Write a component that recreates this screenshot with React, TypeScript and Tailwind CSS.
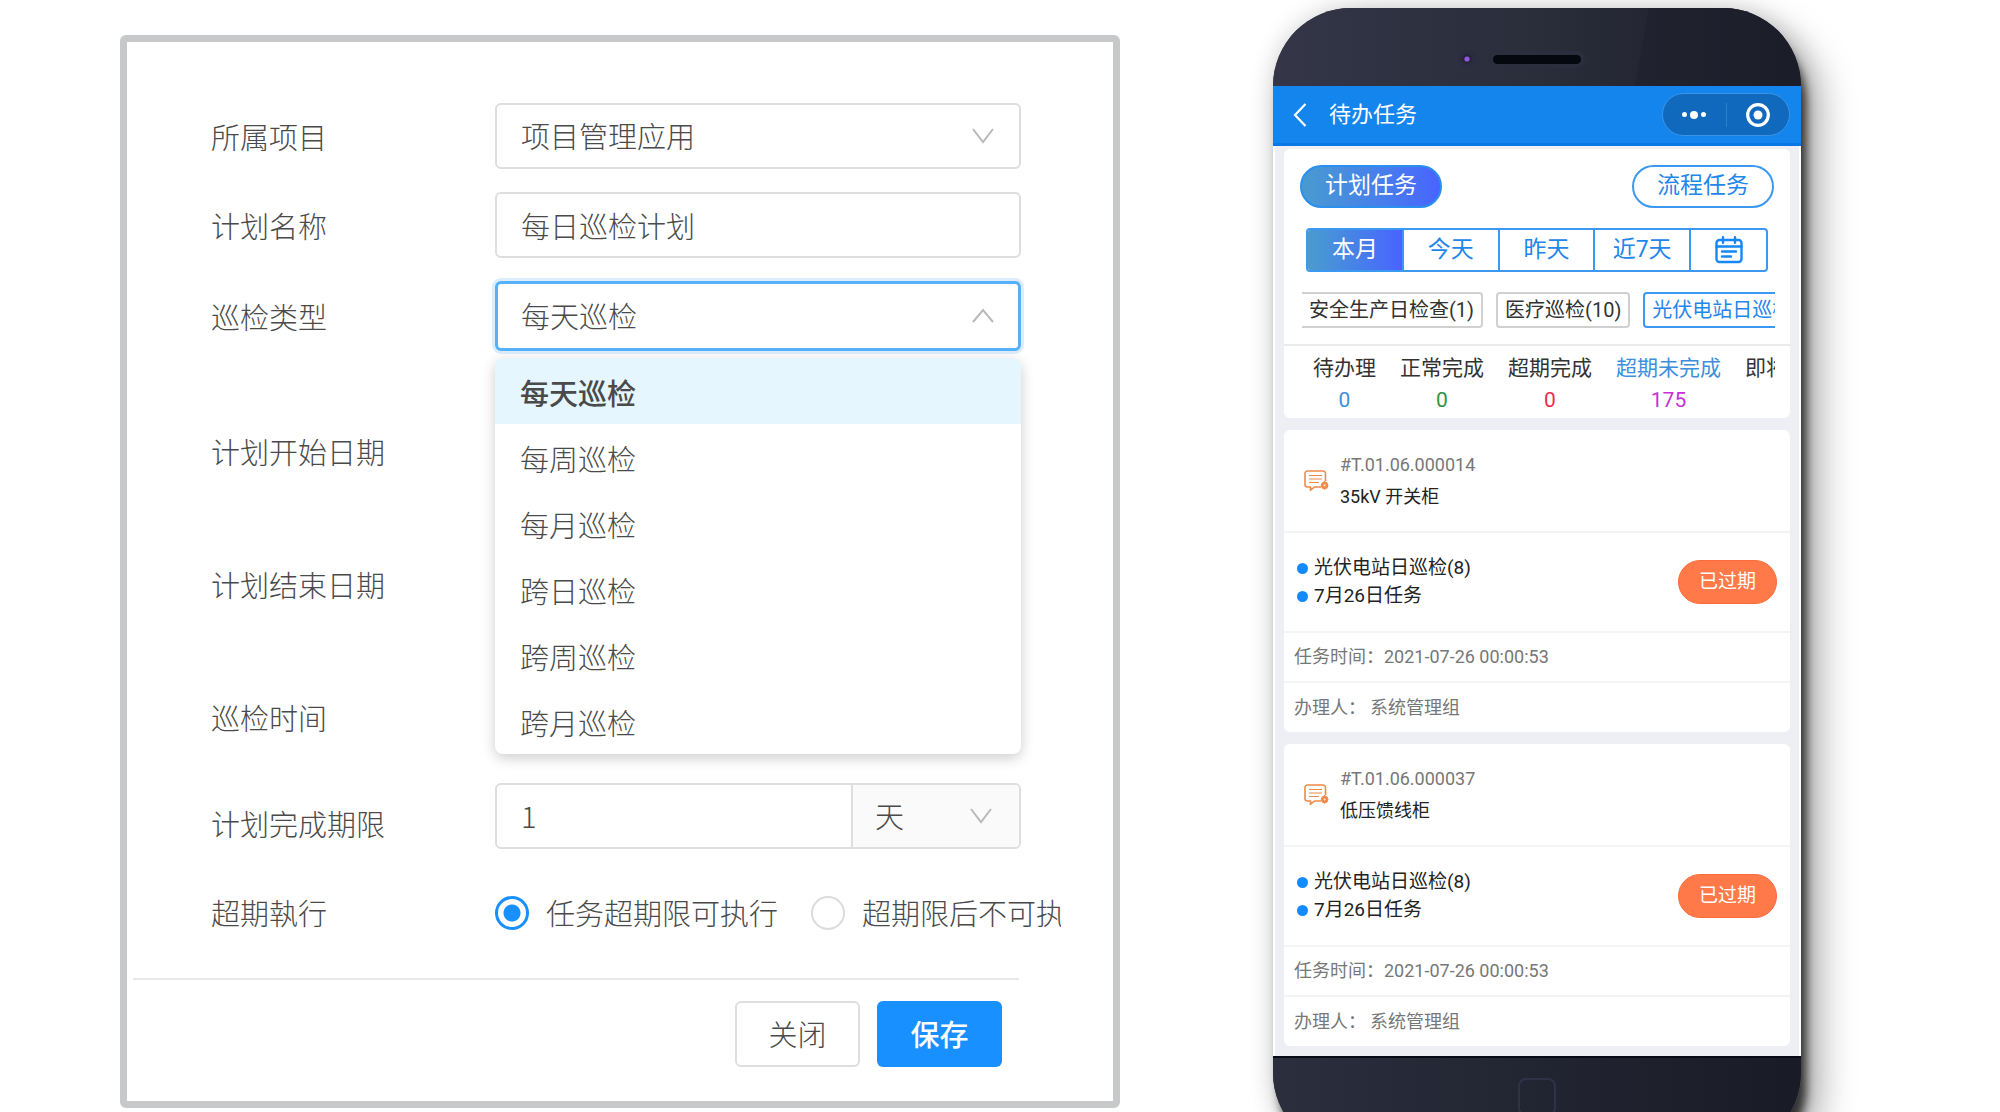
import React from 'react';

const FONT = "font-[Roboto,'Noto_Sans_CJK_SC',sans-serif]";

const inspectionTypes = ['每天巡检', '每周巡检', '每月巡检', '跨日巡检', '跨周巡检', '跨月巡检'];

const ranges = ['本月', '今天', '昨天', '近7天'];

const stats = [
  { label: '待办理', value: '0', labelColor: 'text-[#333]', valueColor: 'text-[#3d8fdc]' },
  { label: '正常完成', value: '0', labelColor: 'text-[#333]', valueColor: 'text-[#2f9440]' },
  { label: '超期完成', value: '0', labelColor: 'text-[#333]', valueColor: 'text-[#f02a55]' },
  { label: '超期未完成', value: '175', labelColor: 'text-[#3d8fdc]', valueColor: 'text-[#c92fd6]' },
  { label: '即将超期', value: '', labelColor: 'text-[#333]', valueColor: 'text-[#333]' },
];

const tasks = [
  { code: '#T.01.06.000014', device: '35kV 开关柜' },
  { code: '#T.01.06.000037', device: '低压馈线柜' },
];

const Chevron = ({ up = false }: { up?: boolean }) => (
  <svg
    className="pointer-events-none absolute right-[26px] top-1/2 -mt-2 h-4 w-6"
    viewBox="0 0 24 16"
    fill="none"
    stroke="#b9b9b9"
    strokeWidth="2"
  >
    {up ? <path d="M2 14 12 2l10 12" /> : <path d="M2 1l10 13L22 1" />}
  </svg>
);

const CalendarIcon = () => (
  <svg className="h-7 w-7" viewBox="0 0 28 28" fill="none" stroke="#1787f5" strokeWidth="2.4" strokeLinecap="round">
    <rect x="1.5" y="4" width="25" height="22" rx="3" />
    <path d="M1.5 10.5h25M8 1.2v5.6M20 1.2v5.6M7 15.5h14M7 20.5h9" />
  </svg>
);

const ChatIcon = () => (
  <svg className="h-[21px] w-[25px]" viewBox="0 0 25 21" fill="none" stroke="#f08a48" strokeWidth="1.6">
    <path d="M17 17H10.500l-4 3.200V17H3.500a2.500 2.500 0 0 1-2.500-2.500v-11A2.500 2.500 0 0 1 3.500 1h15.500A2.500 2.500 0 0 1 21.500 3.500v7.500" />
    <path d="M5 5.500h13M5 9h13M5 12.500h10" strokeWidth="1.200" />
    <circle cx="20.600" cy="15.400" r="3.600" fill="#f08a48" stroke="none" />
    <path d="M20.600 10.800l4 4.600-4 4.600-4-4.600z" fill="#f08a48" stroke="none" />
    <circle cx="20.600" cy="15.400" r="1.100" fill="#fbd9c2" stroke="none" />
  </svg>
);

type RowProps = { label: string; htmlFor?: string; className?: string; children?: React.ReactNode };

const FormRow = ({ label, htmlFor, className = 'items-center mb-[23px]', children }: RowProps) => (
  <div className={`flex ${className}`}>
    <label htmlFor={htmlFor} className="w-[284px] shrink-0 leading-[52px]">
      {label}
    </label>
    {children}
  </div>
);

const PlanForm = () => (
  <form className="mt-[35px] h-fit min-w-0 flex-1 rounded-md border-[7px] border-[#c6c8ca] bg-white pb-[34px] pt-[61px] font-['Noto_Sans_CJK_SC',sans-serif] text-[29px] font-light text-[#4a4a4a]">
    <div className="pl-[84px] pr-[92px]">
      <FormRow label="所属项目" htmlFor="project">
        <div className="relative flex-1">
          <select id="project" className="h-[66px] w-full appearance-none rounded-md border-2 border-[#dedede] bg-white px-6">
            <option>项目管理应用</option>
          </select>
          <Chevron />
        </div>
      </FormRow>

      <FormRow label="计划名称" htmlFor="planName">
        <input
          id="planName"
          defaultValue="每日巡检计划"
          className="h-[66px] min-w-0 flex-1 rounded-md border-2 border-[#dedede] px-6"
        />
      </FormRow>

      <FormRow label="巡检类型" htmlFor="planType" className="items-center mb-[33px]">
        <div className="relative flex-1">
          <select
            id="planType"
            className="h-[70px] w-full appearance-none rounded-md border-[3px] border-[#57b0fb] bg-white px-[23px] shadow-[0_0_0_3px_#dceefd]"
          >
            {inspectionTypes.map((type) => (
              <option key={type}>{type}</option>
            ))}
          </select>
          <Chevron up />
          {/* Open option list */}
          <ul className="absolute left-0 top-full z-10 mt-[7px] w-full overflow-hidden rounded-lg bg-white shadow-[0_4px_14px_rgba(0,0,0,0.2)]">
            {inspectionTypes.map((type, index) => (
              <li
                key={type}
                className={`flex h-[66px] items-center px-[25px] pt-1 ${index === 0 ? 'bg-[#e5f6ff] font-medium' : ''}`}
              >
                {type}
              </li>
            ))}
          </ul>
        </div>
      </FormRow>

      <FormRow label="计划开始日期" className="h-[133px] items-center" />
      <FormRow label="计划结束日期" className="h-[133px] items-center" />
      <FormRow label="巡检时间" className="h-[133px] items-center" />

      <FormRow label="计划完成期限" htmlFor="limit" className="items-end mb-8">
        <div className="flex h-[66px] flex-1 overflow-hidden rounded-md border-2 border-[#dedede]">
          <input id="limit" defaultValue="1" className="min-w-0 flex-1 px-6" />
          <div className="relative w-[168px] border-l-2 border-[#dedede]">
            <select aria-label="单位" className="h-full w-full appearance-none bg-[#fafafa] px-[22px]">
              <option>天</option>
            </select>
            <Chevron />
          </div>
        </div>
      </FormRow>

      <div className="-mr-10 flex h-16 items-center overflow-hidden whitespace-nowrap">
        <span className="w-[284px] shrink-0">超期執行</span>
        <label className="flex shrink-0 items-center gap-[17px]">
          <input
            type="radio"
            name="overdue"
            defaultChecked
            className="h-[34px] w-[34px] appearance-none rounded-full border-2 border-[#dcdcdc] checked:border-[3px] checked:border-[#1890ff] checked:bg-[radial-gradient(#1890ff_8px,#fff_9px)]"
          />
          任务超期限可执行
        </label>
        <label className="ml-[33px] flex shrink-0 items-center gap-[17px]">
          <input
            type="radio"
            name="overdue"
            className="h-[34px] w-[34px] appearance-none rounded-full border-2 border-[#dcdcdc] checked:border-[3px] checked:border-[#1890ff] checked:bg-[radial-gradient(#1890ff_8px,#fff_9px)]"
          />
          超期限后不可执行
        </label>
      </div>
    </div>

    <hr className="ml-1.5 mr-[94px] mt-[33px] border-t-2 border-[#e8e8e8]" />

    <div className="mt-[21px] flex justify-end gap-[17px] pr-[111px]">
      <button type="button" className="h-[66px] w-[125px] rounded-md border-2 border-[#dedede] bg-white">
        关闭
      </button>
      <button type="submit" className="h-[66px] w-[125px] rounded-md bg-[#1890ff] font-medium text-white">
        保存
      </button>
    </div>
  </form>
);

const TaskCard = ({ code, device }: { code: string; device: string }) => (
  <article className="rounded-md bg-white text-[18px] text-[#777]">
    <div className="flex h-[103px] items-center gap-[11px] border-b-2 border-[#f4f4f5] pl-5">
      <ChatIcon />
      <div className="leading-8">
        <p>{code}</p>
        <p className="text-[#222]">{device}</p>
      </div>
    </div>
    <div className="flex h-[100px] items-center justify-between border-b-2 border-[#f4f4f5] pl-[13px] pr-[13px]">
      <ul className="text-[19px] leading-7 text-[#222]">
        {['光伏电站日巡检(8)', '7月26日任务'].map((line) => (
          <li key={line} className="flex items-center gap-1.5">
            <span className="h-[11px] w-[11px] rounded-full bg-[#148aff]" />
            {line}
          </li>
        ))}
      </ul>
      <button className="h-11 w-[99px] rounded-full border border-[#ff6a3c] bg-[#ff7a48] text-[19px] text-white">已过期</button>
    </div>
    <p className="border-b-2 border-[#f4f4f5] pl-2.5 leading-[48px]">任务时间：2021-07-26 00:00:53</p>
    <p className="flex gap-1 pl-2.5 leading-[49px]">
      <span>办理人：</span>
      <span>系统管理组</span>
    </p>
  </article>
);

const Phone = () => (
  <div className="mt-2 h-fit w-[528px] shrink-0 overflow-hidden rounded-[78px] bg-gradient-to-br from-[#353749] to-[#191b27] shadow-[6px_16px_10px_-1px_rgba(0,0,0,0.7),18px_18px_36px_rgba(0,0,0,0.35),0_0_24px_rgba(0,0,0,0.15)]">
    <div className="relative h-[78px] bg-gradient-to-r from-[#343648] via-[#2a2d3a] to-[#1c1e29]">
      {/* Camera and speaker */}
      <svg className="absolute inset-0 h-full w-full" viewBox="0 0 528 78">
        <path d="M376 0H528V78H362z" fill="#1b1e28" opacity=".35" />
        <circle cx="194" cy="51" r="9" fill="#2b2c3f" />
        <circle cx="194" cy="51" r="5" fill="#252537" />
        <circle cx="194" cy="51" r="2.600" fill="#9257e0" />
        <rect x="216" y="43" width="96" height="17" rx="8.500" fill="#2b2e3d" />
        <rect x="220" y="47" width="88" height="9" rx="4.500" fill="#05080f" />
      </svg>
    </div>

    <header className="flex h-[60px] items-center border-b-[3px] border-[#0a77e6] bg-[#1585ee] pl-5 pr-[11px] text-white">
      <button aria-label="返回">
        <svg className="h-6 w-3.5" viewBox="0 0 14 24" fill="none" stroke="#fff" strokeWidth="2.2">
          <path d="M12.500 1 2 12l10.500 11" />
        </svg>
      </button>
      <h1 className="ml-[22px] flex-1 text-[22px]">待办任务</h1>
      <div className="flex h-[43px] w-32 items-center rounded-full border border-[#3a95ea] bg-[#1169bd]">
        <button aria-label="更多" className="flex flex-1 items-center justify-center gap-[3px]">
          <span className="h-[5px] w-[5px] rounded-full bg-white" />
          <span className="h-2 w-2 rounded-full bg-white" />
          <span className="h-[5px] w-[5px] rounded-full bg-white" />
        </button>
        <span className="h-6 w-px bg-[#2f7fc9]" />
        <button aria-label="关闭小程序" className="flex flex-1 justify-center">
          <svg className="h-6 w-6" viewBox="0 0 24 24">
            <circle cx="12" cy="12" r="10.300" fill="none" stroke="#fff" strokeWidth="3.2" />
            <circle cx="12" cy="12" r="4.500" fill="#fff" />
          </svg>
        </button>
      </div>
    </header>

    <main className="space-y-3 border-x-2 border-white bg-[#eeeff4] px-[9px] pb-2.5 pt-[3px]">
      <section className="rounded-md bg-white pb-0.5 pt-4">
        <div className="flex justify-between px-4 text-[23px]">
          <button className="h-[43px] w-[142px] rounded-full border-2 border-[#2b8ff0] bg-gradient-to-r from-[#4a9bcf] to-[#4a62ff] bg-origin-border text-white">
            计划任务
          </button>
          <button className="h-[43px] w-[142px] rounded-full border-2 border-[#3b99f2] text-[#1f86ea]">流程任务</button>
        </div>

        <div className="mx-[22px] mt-5 flex h-11 divide-x-2 divide-[#3b99f2] overflow-hidden rounded-sm border-2 border-[#3b99f2] text-[23px] text-[#1f86ea]">
          {ranges.map((range, index) => (
            <button
              key={range}
              className={`flex-[5] ${index === 0 ? 'bg-gradient-to-r from-[#4a9bcf] to-[#4a62ff] text-white' : ''}`}
            >
              {range}
            </button>
          ))}
          <button aria-label="选择日期" className="flex flex-[4] items-center justify-center">
            <CalendarIcon />
          </button>
        </div>

        <div className="ml-[18px] mr-[15px] mt-5 flex gap-[13px] overflow-hidden whitespace-nowrap text-[20px] leading-8 text-[#333]">
          <button className="shrink-0 rounded-r-sm border-2 border-l-0 border-[#d0d0d0] px-[7px]">安全生产日检查(1)</button>
          <button className="shrink-0 rounded-sm border-2 border-[#d0d0d0] px-[7px]">医疗巡检(10)</button>
          <button className="shrink-0 rounded-sm border-2 border-[#3b99f2] px-[7px] text-[#1f86ea]">光伏电站日巡检(8)</button>
        </div>

        <div className="mt-4 border-t-2 border-[#ebebeb] pl-[29px] pr-[15px] pt-1.5">
          <dl className="flex gap-6 overflow-hidden whitespace-nowrap text-center text-[21px] leading-8">
            {stats.map((stat) => (
              <div key={stat.label} className="shrink-0">
                <dt className={stat.labelColor}>{stat.label}</dt>
                <dd className={stat.valueColor}>{stat.value}</dd>
              </div>
            ))}
          </dl>
        </div>
      </section>

      {tasks.map((task) => (
        <TaskCard key={task.code} {...task} />
      ))}
    </main>

    <div className="flex h-[95px] justify-center border-t-2 border-[#080a15] bg-gradient-to-r from-[#2b2e3d] to-[#191b26] pt-5">
      <button aria-label="主页" className="h-[38px] w-[38px] rounded-lg border-2 border-[#2f3246]" />
    </div>
  </div>
);

const App = () => {
  return (
    <div className={`flex h-screen gap-[153px] overflow-hidden bg-white pl-[120px] pr-[199px] ${FONT}`}>
      <PlanForm />
      <Phone />
    </div>
  );
};

export default App;
